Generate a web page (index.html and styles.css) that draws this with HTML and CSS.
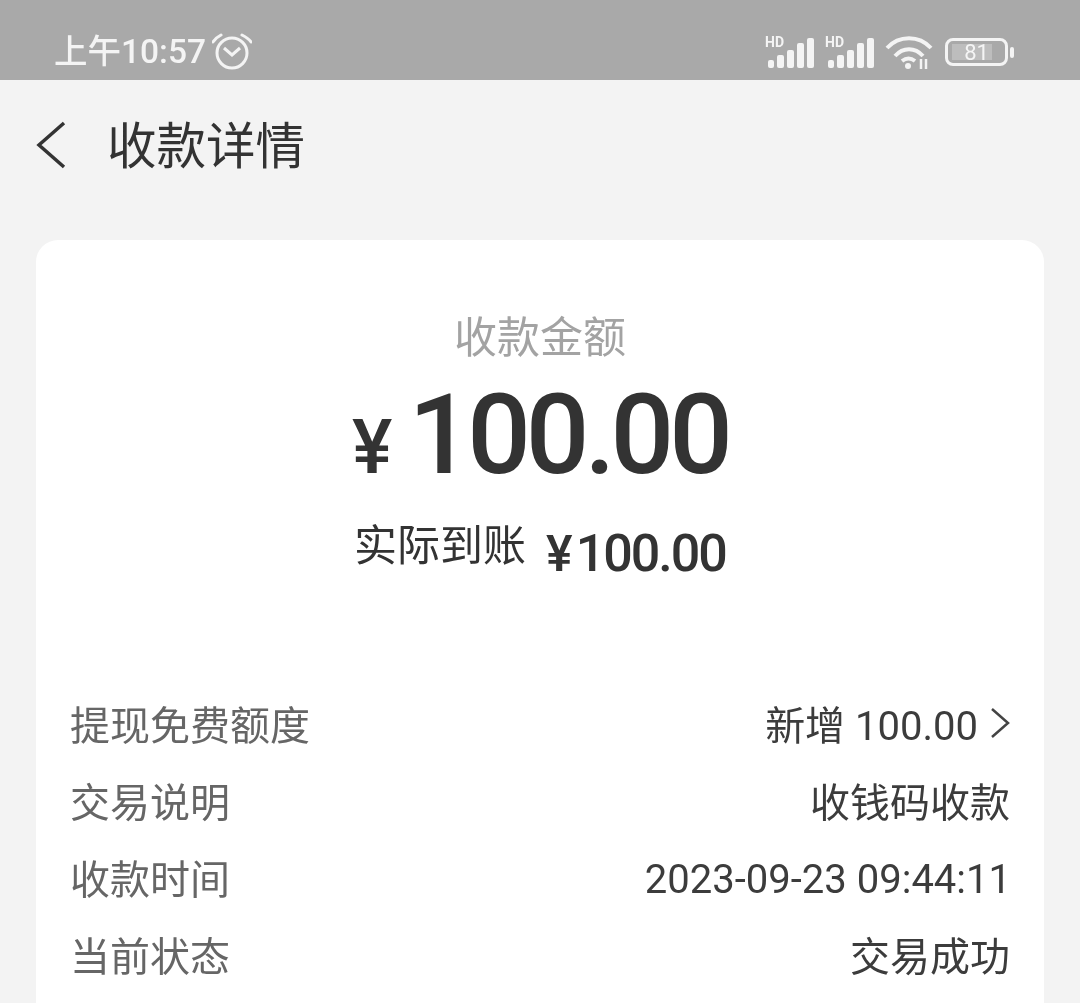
FILE: index.html
```html
<!DOCTYPE html>
<html lang="zh-CN">

<head>
    <meta charset="UTF-8">
    <meta name="viewport" content="width=device-width, initial-scale=1.0">
    <title>收款详情</title>

    <link rel="stylesheet" href="styles.css">

</head>

<body>
    <div class="status-bar">
        <div class="status-left">
            <span class="status-time">上午10:57</span>
            <svg class="alarm" viewBox="0 0 40 38" width="40" height="38" fill="none" stroke="#f4f4f4">
                <circle cx="20" cy="20" r="15" stroke-width="3"/>
                <path d="M12 15l8 7 8-7" stroke-width="3"/>
                <path d="M1 9c2-3 4-5 8-7M39 9c-2-3-5-5-9-7" stroke-width="3" stroke-linecap="round"/>
            </svg>
        </div>
        <div class="status-right">
            <svg viewBox="0 0 50 36" width="50" height="36" fill="#f4f4f4">
                <text class="hd" x="0" y="13">HD</text>
                <rect x="3" y="26" width="6" height="8" rx="2"/>
                <rect x="12" y="21" width="7" height="13" rx="2"/>
                <rect x="22" y="16" width="7" height="18" rx="2"/>
                <rect x="32" y="9" width="7" height="25" rx="2"/>
                <rect x="42" y="4" width="7" height="30" rx="2"/>
            </svg>
            <svg viewBox="0 0 50 36" width="50" height="36" fill="#f4f4f4">
                <text class="hd" x="0" y="13">HD</text>
                <rect x="3" y="26" width="6" height="8" rx="2"/>
                <rect x="12" y="21" width="7" height="13" rx="2"/>
                <rect x="22" y="16" width="7" height="18" rx="2"/>
                <rect x="32" y="9" width="7" height="25" rx="2"/>
                <rect x="42" y="4" width="7" height="30" rx="2"/>
            </svg>
            <svg class="wifi" viewBox="0 0 48 36" width="48" height="36" fill="none" stroke="#f4f4f4" stroke-width="4">
                <path d="M2 14c12-13 32-13 44 0"/>
                <path d="M10 22c8-9 20-9 28 0"/>
                <path d="M17 27c4-3 9-3 13 0"/>
                <circle cx="23" cy="32" r="3" fill="#f4f4f4" stroke="none"/>
                <path d="M36 25v10M41 25v10" stroke-width="2.5"/>
            </svg>
            <div class="battery">
                <div class="battery-body">
                    <div class="battery-level"></div>
                    <span class="battery-num">81</span>
                </div>
                <div class="battery-tip"></div>
            </div>
        </div>
    </div>

    <div class="nav">
        <svg class="back" viewBox="0 0 32 48" width="32" height="48" fill="none" stroke="#333" stroke-width="3.5">
            <path d="M28 2L3 24l25 22"/>
        </svg>
        <span class="nav-title">收款详情</span>
    </div>

    <div class="card">
        <div class="amount-label">收款金额</div>
        <div class="amount">
            <span class="amount-sign">¥</span>
            <span class="amount-num">100.00</span>
        </div>
        <div class="received">
            <span class="received-label">实际到账</span>
            <span class="received-num"><span class="received-sign">¥</span>100.00</span>
        </div>

        <div class="rows">
            <div class="row">
                <span class="row-label">提现免费额度</span>
                <span class="row-value">
                    <span>新增 100.00</span>
                    <svg class="chevron" viewBox="0 0 20 32" width="20" height="32" fill="none" stroke="#444" stroke-width="2.5">
                        <path d="M2 2l16 14L2 30"/>
                    </svg>
                </span>
            </div>
            <div class="row">
                <span class="row-label">交易说明</span>
                <span class="row-value">收钱码收款</span>
            </div>
            <div class="row">
                <span class="row-label">收款时间</span>
                <span class="row-value row-date">2023-09-23 09:44:11</span>
            </div>
            <div class="row">
                <span class="row-label">当前状态</span>
                <span class="row-value">交易成功</span>
            </div>
        </div>
    </div>
</body>
</html>
```

FILE: styles.css
```css
html, body {
    height: 1003px;
    overflow: hidden;
}

body {
    margin: 0;
    font-family: Roboto, "Noto Sans CJK SC", sans-serif;
    background-color: #f3f3f3;
    color: #333;
    filter: blur(0.5px);
}

.status-bar {
    height: 80px;
    background-color: #a9a9a9;
    color: #f4f4f4;
    padding: 24px 66px 0 54px;
    box-sizing: border-box;
    display: flex;
    justify-content: space-between;
    align-items: center;
}

.status-left {
    display: flex;
    align-items: center;
    gap: 6px;
}

.status-time {
    font-size: 33.5px;
    font-weight: 500;
    line-height: 46px;
}

.status-right {
    display: flex;
    align-items: center;
    gap: 10px;
}

.hd {
    font-size: 14px;
    font-weight: 700;
}

.battery {
    display: flex;
    align-items: center;
    gap: 2px;
    margin-left: 2px;
}

.battery-body {
    width: 63px;
    height: 28px;
    border: 3px solid #f4f4f4;
    border-radius: 8px;
    box-sizing: border-box;
    position: relative;
    display: flex;
    align-items: center;
    justify-content: center;
}

.battery-level {
    position: absolute;
    left: 4px;
    top: 3px;
    bottom: 3px;
    width: 40px;
    background-color: #bdbdbd;
}

.battery-num {
    position: relative;
    font-size: 22px;
}

.battery-tip {
    width: 4px;
    height: 11px;
    background-color: #f4f4f4;
    border-radius: 2px;
}

.nav {
    height: 130px;
    padding-left: 36px;
    display: flex;
    align-items: center;
    gap: 39px;
}

.nav-title {
    font-size: 49.5px;
    line-height: 60px;
    padding-top: 4px;
    color: #333;
}

.card {
    margin: 30px 36px 0;
    height: 763px;
    padding: 72px 34px 0;
    box-sizing: border-box;
    background-color: #fff;
    border-radius: 22px 22px 0 0;
    text-align: center;
}

.amount-label {
    font-size: 43px;
    line-height: 52px;
    color: #a3a3a3;
}

.amount {
    display: flex;
    justify-content: center;
    align-items: baseline;
    gap: 16px;
    margin-top: 16px;
    height: 110px;
    line-height: 110px;
}

.amount-sign {
    font-size: 76px;
    font-weight: 500;
}

.amount-num {
    font-size: 112px;
    font-weight: 500;
    letter-spacing: -5px;
}

.received {
    display: flex;
    justify-content: center;
    align-items: center;
    gap: 20px;
    margin-top: 36px;
}

.received-label {
    font-size: 43px;
    line-height: 56px;
    position: relative;
    top: -8px;
}

.received-num {
    font-size: 52px;
    line-height: 56px;
    font-weight: 500;
    letter-spacing: -2px;
}

.received-sign {
    margin-right: 5px;
    font-size: 50px;
}

.rows {
    margin-top: 102px;
    display: flex;
    flex-direction: column;
}

.row {
    height: 77px;
    display: flex;
    justify-content: space-between;
    align-items: center;
    font-size: 40px;
}

.row-label {
    color: #666;
}

.row-value {
    display: flex;
    align-items: center;
    gap: 12px;
    color: #3c3c3c;
}

.row-date {
    padding-top: 6px;
    margin-right: -1px;
}
```
